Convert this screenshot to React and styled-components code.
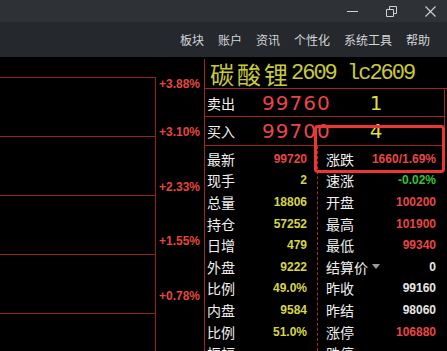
import React from "react";
import styled, { createGlobalStyle } from "styled-components";

const GlobalStyle = createGlobalStyle`
  html, body {
    margin: 0;
    padding: 0;
    background: #000;
  }
  body {
    width: 447px;
    height: 351px;
    overflow: hidden;
    font-family: "Noto Sans CJK SC", "Liberation Sans", sans-serif;
  }
`;

const Screen = styled.div`
  width: 447px;
  height: 351px;
  display: flex;
  flex-direction: column;
  background: #000;
  overflow: hidden;
`;

const TitleBar = styled.div`
  height: 22px;
  flex: none;
  background: #2e3136;
  display: flex;
  justify-content: flex-end;
  align-items: center;
  gap: 28px;
  padding-right: 11px;
`;

const WinButton = styled.svg`
  width: 11px;
  height: 11px;
  display: block;
  color: #cfd1d4;
`;

const MenuBar = styled.div`
  height: 35px;
  flex: none;
  background: #25282d;
  display: flex;
  justify-content: flex-end;
  align-items: center;
  gap: 14px;
  padding-right: 17px;
`;

const MenuItem = styled.span`
  font-size: 12px;
  line-height: 14px;
  color: #d4d6d8;
`;

const Main = styled.div`
  flex: 1;
  display: flex;
  min-height: 0;
`;

const Chart = styled.div`
  width: 204px;
  flex: none;
  display: flex;
`;

const Plot = styled.div`
  width: 156px;
  margin-top: 20px;
  box-sizing: border-box;
  border-right: 1px solid #952222;
  overflow: hidden;
`;

const GridRow = styled.div`
  height: 59px;
  box-sizing: border-box;
  border-top: 1px solid #952222;
`;

const Axis = styled.div`
  flex: 1;
  padding-top: 20px;
  padding-right: 4px;
  display: flex;
  flex-direction: column;
  align-items: flex-end;
`;

const Tick = styled.div`
  height: 59px;
`;

const TickLabel = styled.div`
  margin-top: ${(p) => (p.$first ? "0" : "-7px")};
  font-family: "Liberation Sans", Arial, sans-serif;
  font-weight: bold;
  font-size: 12px;
  line-height: 14px;
  color: #e4473c;
`;

const RightPanel = styled.div`
  flex: 1;
  margin-top: 2px;
  border-left: 1px solid #a02424;
  position: relative;
  display: flex;
  flex-direction: column;
`;

const TitleRow = styled.div`
  height: 30px;
  flex: none;
  box-sizing: border-box;
  border-bottom: 1px solid #a02424;
  display: flex;
  align-items: center;
  padding-left: 5px;
  color: #c9c93c;
  white-space: nowrap;
`;

const TitleCn = styled.span`
  font-size: 24px;
  letter-spacing: 3px;
  line-height: 28px;
`;

const TitleCode = styled.span`
  font-family: "Liberation Mono", "Courier New", monospace;
  font-size: 22px;
  letter-spacing: -2px;
  line-height: 28px;
`;

const QuoteBox = styled.div`
  margin-right: 2px;
  border-right: 1px solid #a02424;
`;

const QuoteRow = styled.div`
  height: ${(p) => (p.$tall ? "29px" : "28px")};
  box-sizing: border-box;
  border-bottom: 1px solid #a02424;
  display: grid;
  grid-template-columns: 57px 80px 68px 1fr;
  align-items: center;
`;

const QuoteLabel = styled.span`
  padding-left: 2px;
  font-size: 14px;
  color: #f0f0f0;
`;

const Price = styled.span`
  font-family: "DejaVu Sans", sans-serif;
  font-size: 20px;
  letter-spacing: 1px;
  color: #e84646;
`;

const Volume = styled.span`
  text-align: center;
  font-family: "DejaVu Sans", sans-serif;
  font-size: 20px;
  color: #dede3e;
`;

const Stats = styled.div`
  flex: 1;
  display: grid;
  grid-template-columns: 113px 1fr;
  min-height: 0;
`;

const StatColumn = styled.div`
  padding: 2px ${(p) => (p.$right ? "11px" : "10px")} 0
    ${(p) => (p.$right ? "8px" : "2px")};
  border-right: ${(p) => (p.$right ? "none" : "1px dashed #b02a2a")};
  overflow: hidden;
`;

const StatRow = styled.div`
  height: 21.6px;
  display: flex;
  justify-content: space-between;
  align-items: center;
`;

const StatLabel = styled.span`
  font-size: 14px;
  line-height: 16px;
  color: #f0f0f0;
  display: flex;
  align-items: center;
`;

const Caret = styled.span`
  width: 0;
  height: 0;
  margin-left: 4px;
  border-left: 4px solid transparent;
  border-right: 4px solid transparent;
  border-top: 5px solid #9a9a9a;
`;

const StatValue = styled.span`
  font-family: "Liberation Sans", Arial, sans-serif;
  font-weight: bold;
  font-size: 12px;
  color: ${(p) => p.$color};
`;

const Highlight = styled.div`
  position: absolute;
  left: 109px;
  top: 66px;
  width: 131px;
  height: 48px;
  box-sizing: border-box;
  border: 3px solid #ec3535;
  border-radius: 4px;
  pointer-events: none;
`;

const RED = "#e84646";
const YELLOW = "#d6d645";
const WHITE = "#e6e6e6";
const GREEN = "#35c235";

const ticks = ["+3.88%", "+3.10%", "+2.33%", "+1.55%", "+0.78%"];

const leftStats = [
  ["最新", "99720", RED],
  ["现手", "2", YELLOW],
  ["总量", "18806", YELLOW],
  ["持仓", "57252", YELLOW],
  ["日增", "479", YELLOW],
  ["外盘", "9222", YELLOW],
  ["比例", "49.0%", YELLOW],
  ["内盘", "9584", YELLOW],
  ["比例", "51.0%", YELLOW],
  ["振幅", "", YELLOW],
];

const rightStats = [
  ["涨跌", "1660/1.69%", RED],
  ["速涨", "-0.02%", GREEN],
  ["开盘", "100200", RED],
  ["最高", "101900", RED],
  ["最低", "99340", RED],
  ["结算价", "0", WHITE, true],
  ["昨收", "99160", WHITE],
  ["昨结", "98060", WHITE],
  ["涨停", "106880", RED],
  ["跌停", "", GREEN],
];

const StatList = ({ rows, right }) => (
  <StatColumn $right={right}>
    {rows.map(([label, value, color, caret], i) => (
      <StatRow key={i}>
        <StatLabel>
          {label}
          {caret && <Caret />}
        </StatLabel>
        <StatValue $color={color}>{value}</StatValue>
      </StatRow>
    ))}
  </StatColumn>
);

export default function App() {
  return (
    <>
      <GlobalStyle />
      <Screen>
        <TitleBar>
          <WinButton viewBox="0 0 11 11">
            <path d="M0 5.5H11" stroke="currentColor" strokeWidth="1" />
          </WinButton>
          <WinButton viewBox="0 0 11 11">
            <path
              d="M0.5 3.5H7.5V10.5H0.5Z M3.5 3.5V0.5H10.5V7.5H7.5"
              fill="none"
              stroke="currentColor"
              strokeWidth="1"
            />
          </WinButton>
          <WinButton viewBox="0 0 11 11">
            <path
              d="M0.5 0.5L10.5 10.5M10.5 0.5L0.5 10.5"
              stroke="currentColor"
              strokeWidth="1.1"
            />
          </WinButton>
        </TitleBar>
        <MenuBar>
          {["板块", "账户", "资讯", "个性化", "系统工具", "帮助"].map((m) => (
            <MenuItem key={m}>{m}</MenuItem>
          ))}
        </MenuBar>
        <Main>
          <Chart>
            <Plot>
              {ticks.map((t) => (
                <GridRow key={t} />
              ))}
            </Plot>
            <Axis>
              {ticks.map((t, i) => (
                <Tick key={t}>
                  <TickLabel $first={i === 0}>{t}</TickLabel>
                </Tick>
              ))}
            </Axis>
          </Chart>
          <RightPanel>
            <TitleRow>
              <TitleCn>碳酸锂</TitleCn>
              <TitleCode>2609 lc2609</TitleCode>
            </TitleRow>
            <QuoteBox>
              <QuoteRow>
                <QuoteLabel>卖出</QuoteLabel>
                <Price>99760</Price>
                <Volume>1</Volume>
              </QuoteRow>
              <QuoteRow $tall>
                <QuoteLabel>买入</QuoteLabel>
                <Price>99700</Price>
                <Volume>4</Volume>
              </QuoteRow>
            </QuoteBox>
            <Stats>
              <StatList rows={leftStats} />
              <StatList rows={rightStats} right />
            </Stats>
            <Highlight />
          </RightPanel>
        </Main>
      </Screen>
    </>
  );
}
